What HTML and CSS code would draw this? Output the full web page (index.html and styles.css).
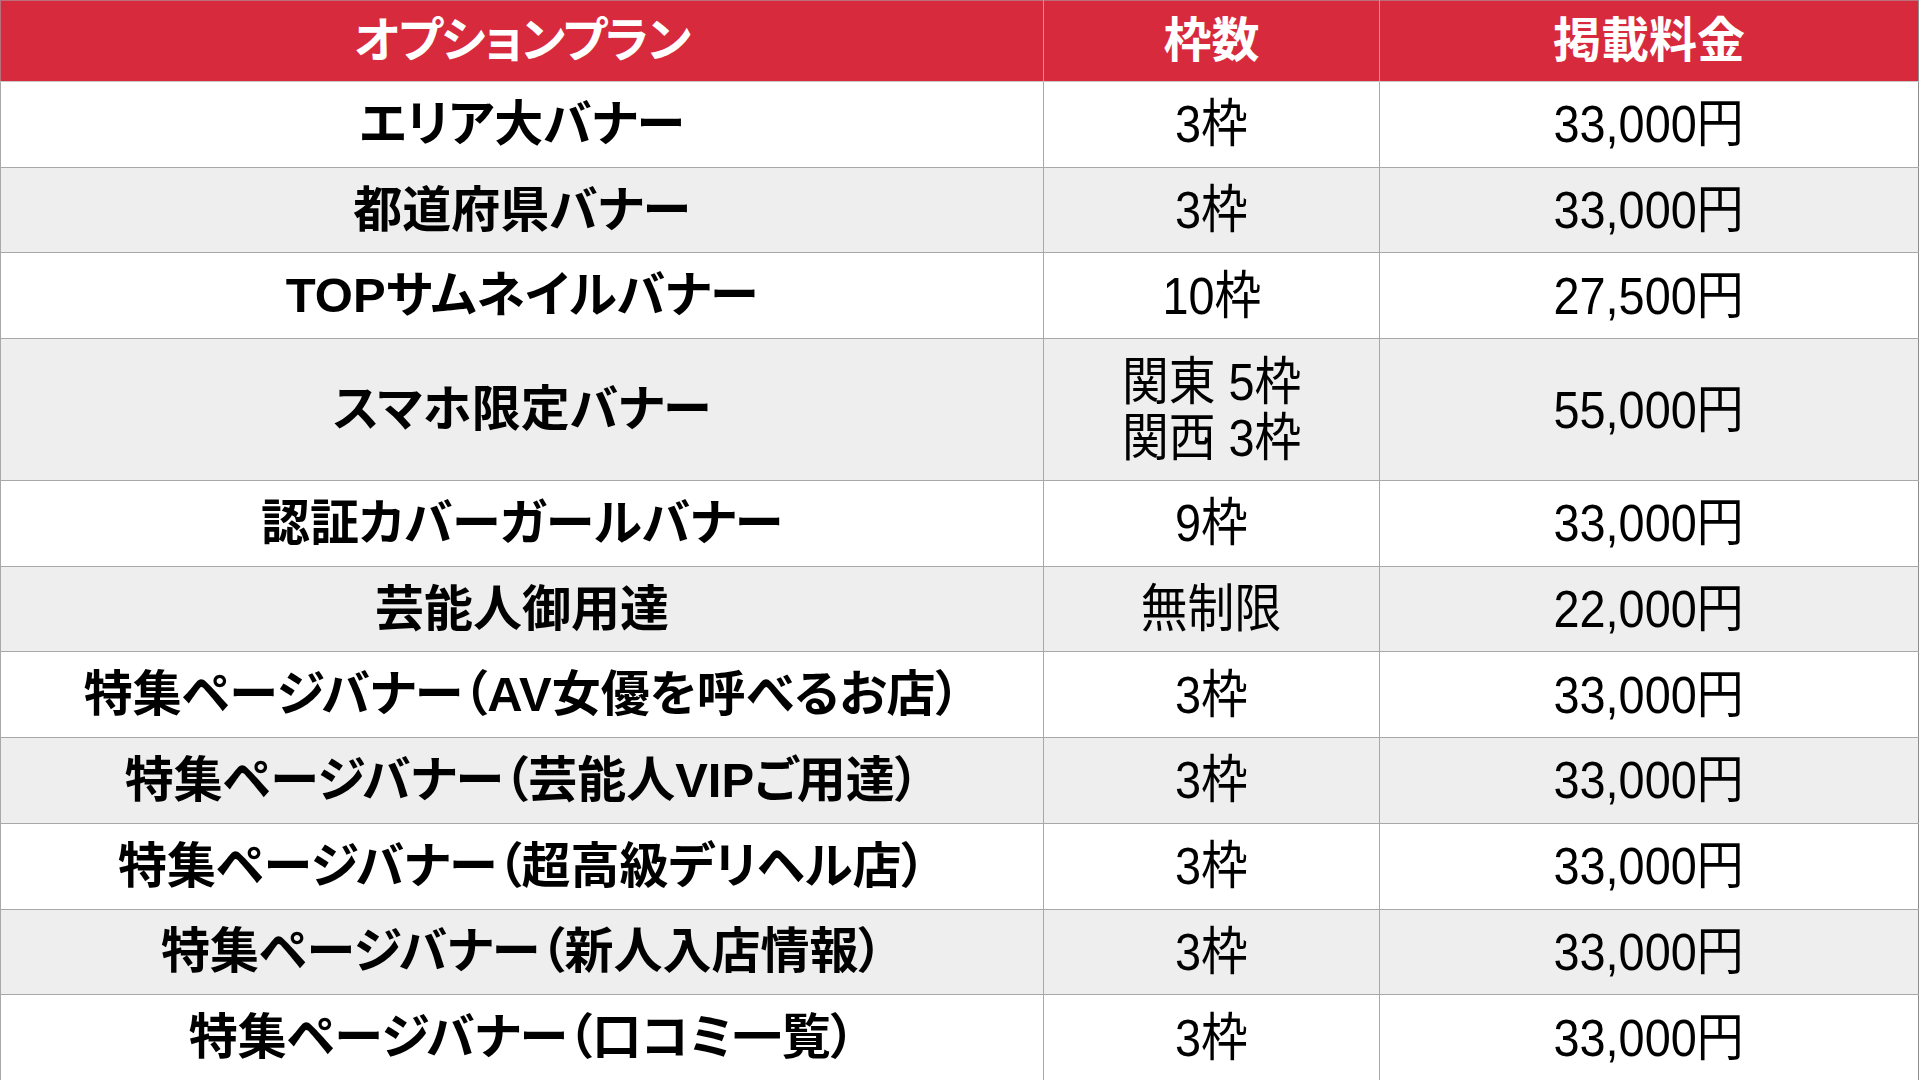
FILE: index.html
```html
<!DOCTYPE html>
<html lang="ja">
<head>
<meta charset="utf-8">
<title>オプションプラン</title>
<link rel="stylesheet" href="styles.css">
</head>
<body>
<table class="plans">
  <colgroup>
    <col class="w-plan">
    <col class="w-slot">
    <col class="w-price">
  </colgroup>
  <thead>
    <tr>
      <th class="h-plan">オプションプラン</th>
      <th>枠数</th>
      <th>掲載料金</th>
    </tr>
  </thead>
  <tbody>
    <tr>
      <td class="plan">エリア大バナー</td>
      <td class="num"><span class="n">3枠</span></td>
      <td class="num"><span class="n">33,000円</span></td>
    </tr>
    <tr>
      <td class="plan">都道府県バナー</td>
      <td class="num"><span class="n">3枠</span></td>
      <td class="num"><span class="n">33,000円</span></td>
    </tr>
    <tr>
      <td class="plan">TOPサムネイルバナー</td>
      <td class="num"><span class="n">10枠</span></td>
      <td class="num"><span class="n">27,500円</span></td>
    </tr>
    <tr class="tall">
      <td class="plan">スマホ限定バナー</td>
      <td class="num"><span class="n two">関東 5枠<br>関西 3枠</span></td>
      <td class="num"><span class="n">55,000円</span></td>
    </tr>
    <tr>
      <td class="plan">認証カバーガールバナー</td>
      <td class="num"><span class="n">9枠</span></td>
      <td class="num"><span class="n">33,000円</span></td>
    </tr>
    <tr>
      <td class="plan">芸能人御用達</td>
      <td class="num"><span class="n">無制限</span></td>
      <td class="num"><span class="n">22,000円</span></td>
    </tr>
    <tr>
      <td class="plan">特集ページバナー（AV女優を呼べるお店）</td>
      <td class="num"><span class="n">3枠</span></td>
      <td class="num"><span class="n">33,000円</span></td>
    </tr>
    <tr>
      <td class="plan">特集ページバナー（芸能人VIPご用達）</td>
      <td class="num"><span class="n">3枠</span></td>
      <td class="num"><span class="n">33,000円</span></td>
    </tr>
    <tr>
      <td class="plan">特集ページバナー（超高級デリヘル店）</td>
      <td class="num"><span class="n">3枠</span></td>
      <td class="num"><span class="n">33,000円</span></td>
    </tr>
    <tr>
      <td class="plan">特集ページバナー（新人入店情報）</td>
      <td class="num"><span class="n">3枠</span></td>
      <td class="num"><span class="n">33,000円</span></td>
    </tr>
    <tr>
      <td class="plan">特集ページバナー（口コミ一覧）</td>
      <td class="num"><span class="n">3枠</span></td>
      <td class="num"><span class="n">33,000円</span></td>
    </tr>
  </tbody>
</table>
</body>
</html>
```

FILE: styles.css
```css
html, body {
  margin: 0;
  padding: 0;
  background: #ffffff;
}

.plans {
  border-collapse: collapse;
  table-layout: fixed;
  width: 1918px;
  font-family: "Liberation Sans", "Noto Sans CJK JP", sans-serif;
  color: #000;
}

.w-plan { width: 1043px; }
.w-slot { width: 336px; }
.w-price { width: 539px; }

.plans th {
  height: 80px;
  padding: 0;
  background: #d72a3c;
  color: #ffffff;
  font-size: 48px;
  font-weight: 700;
  font-feature-settings: "palt";
  text-align: center;
  vertical-align: middle;
  border-top: 1px solid #b9707a;
  border-left: 1px solid #e88a93;
  border-right: 1px solid #e88a93;
  border-bottom: 1px solid #c8c8c8;
  line-height: 1;
}

.plans th.h-plan { letter-spacing: -1.5px; }
.plans th:first-child { border-left-color: #b9707a; }
.plans th:last-child { border-right-color: #8c8c8c; }

.plans td {
  height: 84.7px;
  padding: 0;
  text-align: center;
  vertical-align: middle;
  border: 1px solid #a8a8a8;
  line-height: 1;
}

.plans td:last-child { border-right-color: #8c8c8c; }

.plans tbody tr:nth-child(even) td {
  background: #eeeeee;
}

.plans tr.tall td {
  height: 141px;
}

.plan {
  font-size: 49px;
  font-weight: 700;
  font-feature-settings: "palt";
}

.num .n {
  display: inline-block;
  font-size: 52px;
  font-weight: 400;
  transform: scaleX(0.9);
}

.num .two {
  line-height: 56px;
}
```
